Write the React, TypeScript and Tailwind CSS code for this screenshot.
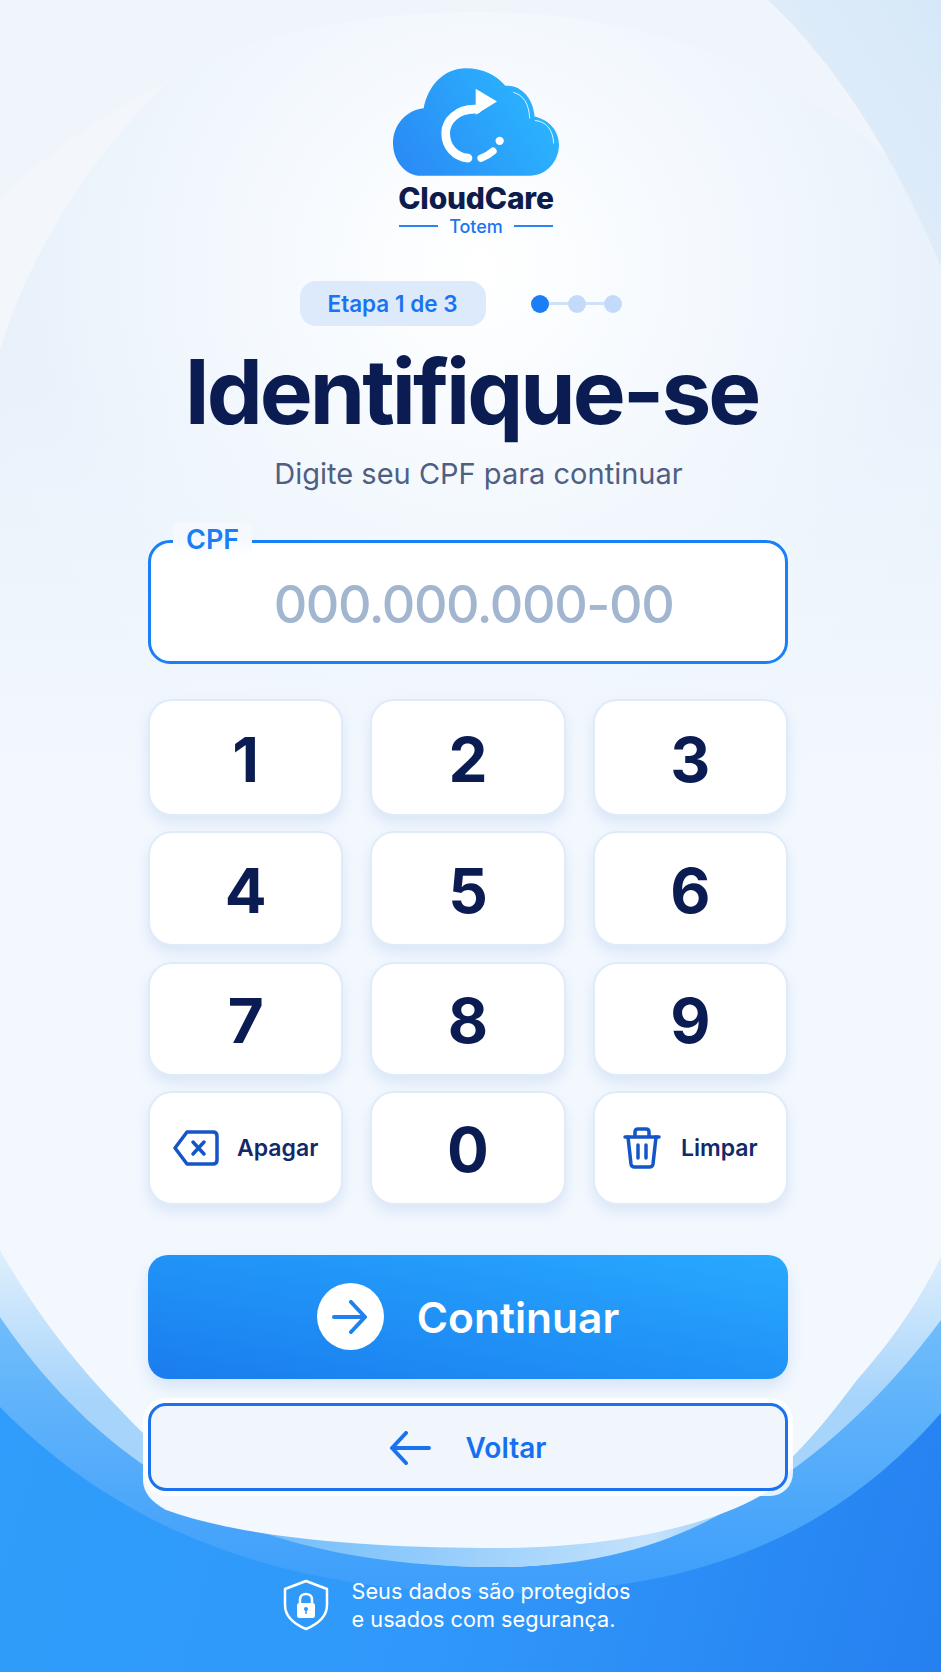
const KEYS = ["1", "2", "3", "4", "5", "6", "7", "8", "9"];

// Decorative page backdrop: the pale bowl and the blue waves under it
function Backdrop() {
  return (
    <svg className="absolute inset-0" width="941" height="1672" viewBox="0 0 941 1672" fill="none">
      <defs>
        <radialGradient id="glow" gradientUnits="userSpaceOnUse" cx="480" cy="270" r="560">
          <stop offset="0" stopColor="#ffffff" />
          <stop offset="0.35" stopColor="#f6fafe" />
          <stop offset="0.8" stopColor="#e9f2fb" />
          <stop offset="1" stopColor="#e8f1fa" />
        </radialGradient>
        <linearGradient id="fade" gradientUnits="userSpaceOnUse" x1="0" y1="380" x2="0" y2="780">
          <stop offset="0" stopColor="#f3f8fe" stopOpacity="0" />
          <stop offset="1" stopColor="#f3f8fe" />
        </linearGradient>
        <linearGradient id="corner" x1="1" y1="0" x2="0" y2="1">
          <stop offset="0" stopColor="#d6e8f8" />
          <stop offset="1" stopColor="#e6f0fb" />
        </linearGradient>
        <linearGradient id="light" gradientUnits="userSpaceOnUse" x1="0" y1="1240" x2="0" y2="1400">
          <stop offset="0" stopColor="#e3f1fd" />
          <stop offset="1" stopColor="#a6d4fb" />
        </linearGradient>
        <linearGradient id="under" gradientUnits="userSpaceOnUse" x1="240" y1="0" x2="790" y2="0">
          <stop offset="0" stopColor="#6fbcfb" />
          <stop offset="0.35" stopColor="#93ccfb" />
          <stop offset="0.75" stopColor="#c4e2fc" />
          <stop offset="1" stopColor="#7cc1fb" />
        </linearGradient>
        <linearGradient id="mid" gradientUnits="userSpaceOnUse" x1="0" y1="1317" x2="0" y2="1580">
          <stop offset="0" stopColor="#70bdfb" />
          <stop offset="1" stopColor="#3f9ffa" />
        </linearGradient>
        <linearGradient id="deep" gradientUnits="userSpaceOnUse" x1="0" y1="1400" x2="941" y2="1672">
          <stop offset="0" stopColor="#2f9dfb" />
          <stop offset="0.5" stopColor="#3098fa" />
          <stop offset="1" stopColor="#2580f0" />
        </linearGradient>
      </defs>
      <rect width="941" height="1672" fill="#eff5fb" />
      <path d="M0 200C120 80 300 12 480 12C680 12 850 100 941 210V1672H0Z" fill="#f3f7fc" />
      <path d="M0 350C30 250 95 150 177 73C270 30 370 12 480 12C680 12 850 100 941 210V1672H0Z" fill="url(#glow)" />
      <rect y="380" width="941" height="1292" fill="url(#fade)" />
      <path d="M768 0C840 67 900 167 941 267V0Z" fill="url(#corner)" />
      <path d="M0 1240C140 1470 300 1590 498 1590C700 1590 840 1440 941 1240V1672H0Z" fill="url(#light)" />
      <path d="M0 1317C90 1450 240 1567 498 1567C680 1567 830 1470 941 1320V1672H0Z" fill="url(#mid)" />
      <path d="M143 1470C220 1530 340 1567 498 1567C620 1567 720 1530 793 1460V1400H143Z" fill="url(#under)" />
      <path d="M0 1407C130 1540 300 1593 498 1593C690 1593 830 1540 941 1413V1672H0Z" fill="url(#deep)" />
      <path
        d="M0 1250C45 1330 95 1385 143 1433V1480C143 1493 152 1502 166 1510C250 1540 380 1548 498 1548C600 1548 700 1530 760 1496C782 1484 793 1472 793 1452V1440C850 1395 905 1330 941 1257V1100H0Z"
        fill="#f3f8fe"
      />
    </svg>
  );
}

function Logo() {
  return (
    <svg width="166" height="108" viewBox="160 55 498 323" fill="none">
      <defs>
        <linearGradient id="cloud" x1="0" y1="0.7" x2="1" y2="0.3">
          <stop offset="0" stopColor="#2a8cf6" />
          <stop offset="1" stopColor="#2bb8ff" />
        </linearGradient>
      </defs>
      <path
        d="M245 378C195 378 160 330 160 280C160 225 200 180 252 175C265 105 315 55 378 55C430 55 470 75 497 108C545 105 580 145 585 200C630 210 658 245 658 285C658 335 620 378 570 378Z"
        fill="url(#cloud)"
      />
      <path d="M412 178C350 175 318 215 318 250C318 290 345 320 385 325" stroke="#fff" strokeWidth="26" strokeLinecap="round" />
      <path d="M408 117L472 155L408 195Z" fill="#fff" />
      <path d="M424 325Q445 318 460 304" stroke="#fff" strokeWidth="22" strokeLinecap="round" />
      <circle cx="480" cy="273" r="12.5" fill="#fff" />
      <path d="M522 128C550 135 568 160 570 205M587 212C620 215 640 240 642 280" stroke="#fff" strokeOpacity="0.85" strokeWidth="3" strokeLinecap="round" />
    </svg>
  );
}

function StepDots() {
  return (
    <div className="flex items-center">
      <div className="h-[18px] w-[18px] rounded-full bg-[#1b7ef5]" />
      <div className="h-[3px] w-[19px] bg-[#d0e2f9]" />
      <div className="h-[18px] w-[18px] rounded-full bg-[#c3daf8]" />
      <div className="h-[3px] w-[18px] bg-[#d0e2f9]" />
      <div className="h-[18px] w-[18px] rounded-full bg-[#c3daf8]" />
    </div>
  );
}

function Key({ children }: { children: React.ReactNode }) {
  return (
    <button className="flex items-center justify-center rounded-[24px] border-2 border-[#e0ebf9] bg-white shadow-[0_7px_14px_rgba(120,160,220,0.2)]">
      {children}
    </button>
  );
}

function BackspaceIcon() {
  return (
    <svg width="46" height="36" viewBox="0 0 46 36" fill="none" stroke="#1456c8" strokeWidth="3.5" strokeLinejoin="round" strokeLinecap="round">
      <path d="M14 2H40C42.5 2 44 3.5 44 6V30C44 32.5 42.5 34 40 34H14L2 18Z" />
      <path d="M20 12L31 24M31 12L20 24" />
    </svg>
  );
}

function TrashIcon() {
  return (
    <svg width="38" height="42" viewBox="0 0 38 42" fill="none" stroke="#1456c8" strokeWidth="3.5" strokeLinejoin="round" strokeLinecap="round">
      <path d="M2 10H36" />
      <path d="M12 9V5C12 3 13 2 15 2H23C25 2 26 3 26 5V9" />
      <path d="M5 10L8 37C8.3 39 9.5 40 11.5 40H26.5C28.5 40 29.7 39 30 37L33 10" />
      <path d="M15 18V31M23 18V31" />
    </svg>
  );
}

function ShieldIcon() {
  return (
    <svg width="46" height="52" viewBox="0 0 46 52" fill="none">
      <path d="M23 2L44 10V26C44 37 35 45 23 50C11 45 2 37 2 26V10Z" stroke="#fff" strokeWidth="2.5" strokeLinejoin="round" />
      <path d="M17 25V20.5C17 17 19.5 15 23 15C26.5 15 29 17 29 20.5V25" stroke="#fff" strokeWidth="2.5" />
      <rect x="14" y="24" width="18" height="15" rx="2.5" fill="#fff" />
      <circle cx="23" cy="30" r="2" fill="#2f96f8" />
      <path d="M23 30V35" stroke="#2f96f8" strokeWidth="1.5" />
    </svg>
  );
}

export default function App() {
  return (
    <div className="relative h-[1672px] w-full overflow-hidden font-['Inter',sans-serif]">
      <Backdrop />

      <div className="relative flex flex-col items-center pt-[68px]">
        <div className="ml-[11px] flex flex-col items-center">
          <Logo />
          <div className="mt-[7px] text-[30px] leading-[30px] font-extrabold tracking-[-0.2px] text-[#0d1c4d]">CloudCare</div>
          <div className="mt-[1px] flex h-[24px] w-[155px] items-center justify-between">
            <div className="h-[2px] w-[39px] bg-[#2a84f5]" />
            <span className="text-[18px] font-medium text-[#1c74f2]">Totem</span>
            <div className="h-[2px] w-[39px] bg-[#2a84f5]" />
          </div>
        </div>

        <div className="mt-[43px] mr-[20px] flex items-center gap-[45px]">
          <div className="flex h-[45px] w-[186px] items-center justify-center rounded-[16px] bg-[#dceafb] text-[22.5px] font-semibold text-[#1a73f0]">
            Etapa 1 de 3
          </div>
          <StepDots />
        </div>

        <h1 className="mt-[16px] ml-[2px] text-[89px] leading-[100px] font-bold tracking-[-3px] text-[#0a1c52]">Identifique-se</h1>
        <p className="mt-[15px] ml-[16px] text-[29px] leading-[34px] text-[#4f5f82]">Digite seu CPF para continuar</p>

        <div className="relative mt-[49px] mr-[5px] flex h-[124px] w-[640px] items-center justify-center rounded-[22px] border-[3px] border-[#1a80f8] bg-white pt-[5px] pl-[11px]">
          <span className="absolute -top-[20px] left-[22px] bg-gradient-to-b from-[#f5f9fe] via-[#f5f9fe] to-white px-[13px] text-[27px] leading-[34px] font-semibold text-[#1a7ef5]">CPF</span>
          <span className="text-[52px] font-medium tracking-[-1.4px] text-[#a3b6d0]">000.000.000-00</span>
        </div>

        <div className="mt-[35px] mr-[5px] grid w-[640px] grid-cols-3 grid-rows-[117px_115px_114px_114px] gap-x-[27px] gap-y-[15.3px]">
          {KEYS.map((k) => (
            <Key key={k}>
              <span className="pt-[3px] text-[62px] font-bold text-[#0a1c52]">{k}</span>
            </Key>
          ))}
          <Key>
            <BackspaceIcon />
            <span className="ml-[18px] text-[23px] font-semibold text-[#12296b]">Apagar</span>
          </Key>
          <Key>
            <span className="pt-[3px] text-[62px] font-bold text-[#0a1c52]">0</span>
          </Key>
          <Key>
            <TrashIcon />
            <span className="ml-[20px] text-[23px] font-semibold text-[#12296b]">Limpar</span>
          </Key>
        </div>

        <button className="mt-[50px] mr-[5px] flex h-[124px] w-[640px] items-center justify-center gap-[33px] rounded-[20px] bg-gradient-to-tr from-[#1b7cee] to-[#29a9ff] shadow-[0_8px_16px_rgba(80,140,220,0.18)]">
          <div className="flex h-[67px] w-[67px] items-center justify-center rounded-full bg-white">
            <svg width="36" height="34" viewBox="0 0 36 34" fill="none" stroke="#1f80f0" strokeWidth="4" strokeLinecap="round" strokeLinejoin="round">
              <path d="M2 17H33M19 2L33 17L19 32" />
            </svg>
          </div>
          <span className="mt-[2px] text-[42.5px] font-semibold text-white">Continuar</span>
        </button>

        <button className="mt-[24px] mr-[5px] flex h-[88px] w-[640px] items-center justify-center gap-[35px] rounded-[18px] border-[3px] border-[#1a72ee] bg-[#f1f6fd] pt-[2px] shadow-[0_0_0_5px_rgba(255,255,255,0.85)]">
          <svg width="41" height="34" viewBox="0 0 41 34" fill="none" stroke="#1a72ee" strokeWidth="4" strokeLinecap="round" strokeLinejoin="round">
            <path d="M39 17H2M16 2L2 17L16 32" />
          </svg>
          <span className="text-[28px] font-semibold text-[#1570f0]">Voltar</span>
        </button>

        <div className="mt-[86px] mr-[28px] flex items-center gap-[23px]">
          <ShieldIcon />
          <p className="text-[21.7px] leading-[28px] text-white">
            Seus dados são protegidos
            <br />e usados com segurança.
          </p>
        </div>
      </div>
    </div>
  );
}
